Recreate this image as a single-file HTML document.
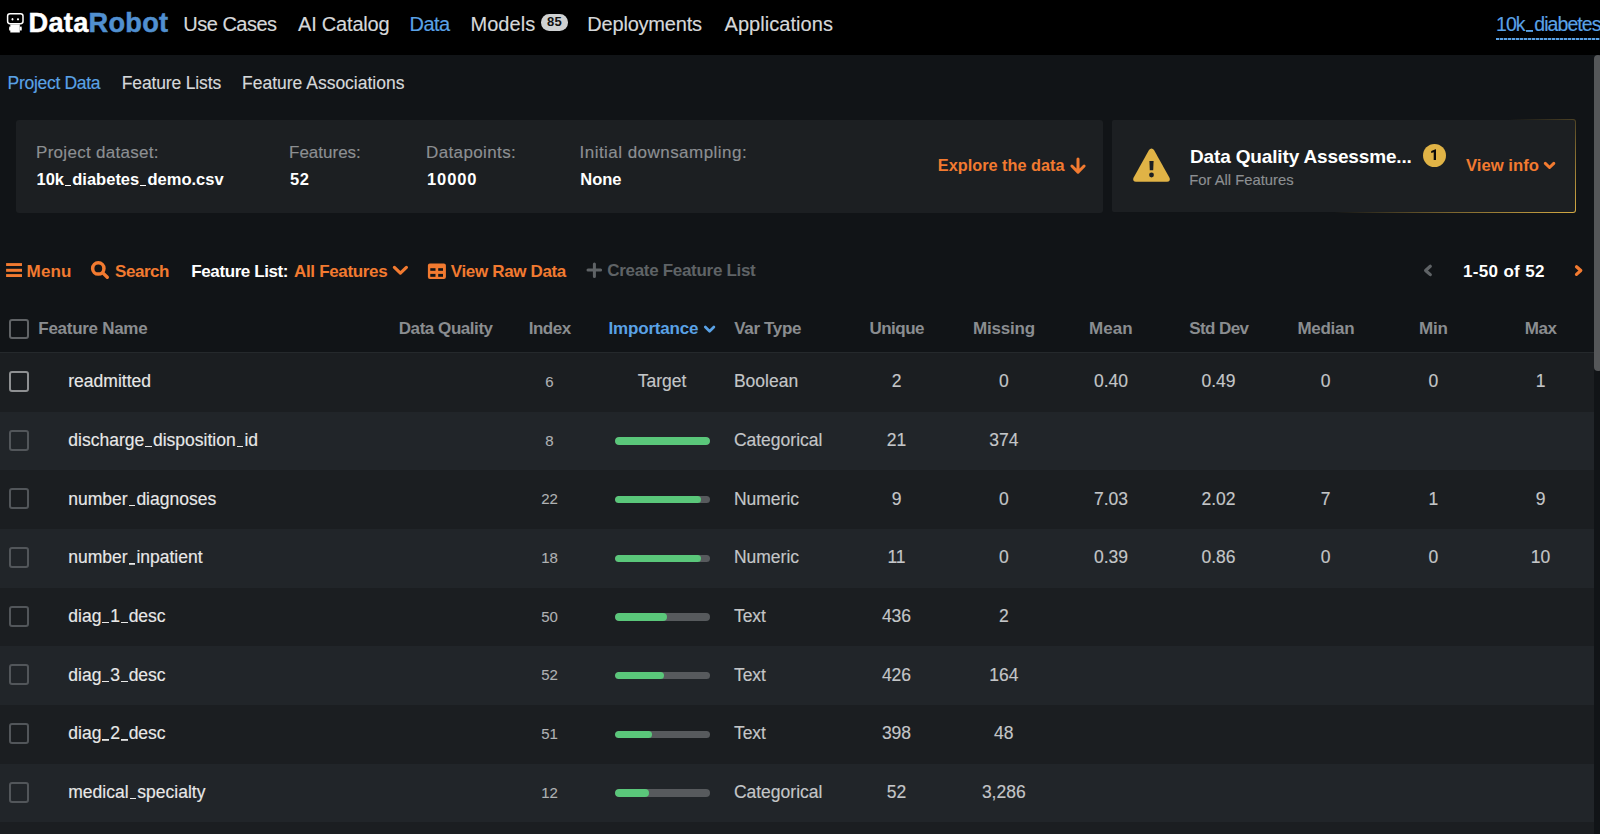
<!DOCTYPE html>
<html><head><meta charset="utf-8"><style>
html,body{margin:0;padding:0;}
body{width:1600px;height:834px;overflow:hidden;position:relative;background:#111417;font-family:"Liberation Sans", sans-serif;}
.t{position:absolute;white-space:nowrap;-webkit-text-stroke:0.15px currentColor;}
.r{position:absolute;}
.u{display:inline-block;width:0.5em;height:0.09em;vertical-align:baseline;position:relative;top:0.08em;background:linear-gradient(currentColor,currentColor) center/78% 100% no-repeat;}
</style></head><body>
<div class="r" style="left:0px;top:0px;width:1600px;height:55px;background:#000;"></div>
<svg class="r" style="left:3px;top:10px" width="25" height="25" viewBox="3 10 25 25">
<rect x="7.6" y="13.7" width="15.4" height="10" rx="2.4" fill="none" stroke="#fff" stroke-width="1.5"/>
<ellipse cx="12.5" cy="19.3" rx="0.9" ry="1.3" fill="#fff"/><circle cx="18" cy="19.3" r="1.1" fill="#fff"/>
<path d="M10.3 24.4 H19.8 V32.5 H10.3 Z" fill="#fff"/>
<path d="M9.4 26.6 Q10.4 26 11 27 V30.6 H9.2 Q8.9 28 9.4 26.6 Z M21.5 26.6 Q20.5 26 19.8 27 V30.6 H21.7 Q22 28 21.5 26.6 Z" fill="#fff"/>
</svg>
<div class="t" style="left:28.60px;top:6.48px;font-size:27.2px;line-height:33px;color:#fff;font-weight:700;-webkit-text-stroke:0;letter-spacing:0.25px;-webkit-text-stroke:0.5px currentColor;"><span style="color:#fff">Data</span><span style="color:#5190d0">Robot</span></div>
<div class="t" style="left:183.30px;top:11.87px;font-size:20px;line-height:24px;color:#d6d8da;letter-spacing:-0.5px;">Use Cases</div>
<div class="t" style="left:298.00px;top:11.87px;font-size:20px;line-height:24px;color:#d6d8da;letter-spacing:-0.2px;">AI Catalog</div>
<div class="t" style="left:409.50px;top:11.87px;font-size:20px;line-height:24px;color:#5aa2e6;letter-spacing:-0.5px;">Data</div>
<div class="t" style="left:470.40px;top:11.87px;font-size:20px;line-height:24px;color:#d6d8da;letter-spacing:0.1px;">Models</div>
<div class="r" style="left:541.2px;top:14.3px;width:26.4px;height:16.4px;border-radius:8.2px;background:#cfd1d2;"></div>
<div class="t" style="left:541.60px;width:26px;text-align:center;top:14.40px;font-size:13px;line-height:16px;color:#111;font-weight:700;-webkit-text-stroke:0;letter-spacing:0.3px;">85</div>
<div class="t" style="left:587.30px;top:11.87px;font-size:20px;line-height:24px;color:#d6d8da;letter-spacing:-0.2px;">Deployments</div>
<div class="t" style="left:724.50px;top:11.87px;font-size:20px;line-height:24px;color:#d6d8da;letter-spacing:0.05px;">Applications</div>
<div class="t" style="left:1496.00px;top:12.54px;font-size:19.5px;line-height:23px;color:#5aa2e6;letter-spacing:-0.95px;">10k<span class="u"></span>diabetes<span class="u"></span>demo.csv</div>
<div class="r" style="left:1495.5px;top:38px;width:104.5px;height:2px;background:repeating-linear-gradient(90deg,#5aa2e6 0 3px,rgba(90,162,230,0.35) 3px 4px);"></div>
<div class="r" style="left:0px;top:55px;width:1600px;height:779px;background:#111417;"></div>
<div class="t" style="left:7.60px;top:72.64px;font-size:17.5px;line-height:21px;color:#5aa2e6;letter-spacing:-0.3px;">Project Data</div>
<div class="t" style="left:121.80px;top:72.64px;font-size:17.5px;line-height:21px;color:#d6d8da;letter-spacing:-0.15px;">Feature Lists</div>
<div class="t" style="left:242.00px;top:72.64px;font-size:17.5px;line-height:21px;color:#d6d8da;">Feature Associations</div>
<div class="r" style="left:16px;top:120px;width:1087px;height:92.5px;background:#1c1f22;border-radius:3px;"></div>
<div class="t" style="left:36.00px;top:142.61px;font-size:17px;line-height:20px;color:#8c8f92;letter-spacing:0.29px;">Project dataset:</div>
<div class="t" style="left:36.50px;top:168.98px;font-size:16.5px;line-height:20px;color:#fff;font-weight:700;-webkit-text-stroke:0;">10k<span class="u"></span>diabetes<span class="u"></span>demo.csv</div>
<div class="t" style="left:289.00px;top:142.61px;font-size:17px;line-height:20px;color:#8c8f92;">Features:</div>
<div class="t" style="left:290.00px;top:168.98px;font-size:16.5px;line-height:20px;color:#fff;font-weight:700;-webkit-text-stroke:0;letter-spacing:0.5px;">52</div>
<div class="t" style="left:426.00px;top:142.61px;font-size:17px;line-height:20px;color:#8c8f92;letter-spacing:0.38px;">Datapoints:</div>
<div class="t" style="left:427.00px;top:168.98px;font-size:16.5px;line-height:20px;color:#fff;font-weight:700;-webkit-text-stroke:0;letter-spacing:0.9px;">10000</div>
<div class="t" style="left:579.60px;top:142.61px;font-size:17px;line-height:20px;color:#8c8f92;letter-spacing:0.46px;">Initial downsampling:</div>
<div class="t" style="left:580.30px;top:168.98px;font-size:16.5px;line-height:20px;color:#fff;font-weight:700;-webkit-text-stroke:0;">None</div>
<div class="t" style="left:937.80px;top:155.15px;font-size:16.3px;line-height:20px;color:#f27a30;font-weight:700;-webkit-text-stroke:0;">Explore the data</div>
<svg class="r" style="left:1069px;top:157px" width="18" height="18" viewBox="0 0 18 18">
<path d="M9 2.0 V15.2 M2.9 9.0 L9 15.2 L15.1 9.0" fill="none" stroke="#f27a30" stroke-width="3" stroke-linecap="round" stroke-linejoin="round"/></svg>
<div class="r" style="left:1111.2px;top:118.6px;width:465px;height:94.8px;border-radius:3px;border:1px solid transparent;box-sizing:border-box;background:linear-gradient(#1c1f22,#1c1f22) padding-box, linear-gradient(152deg, rgba(224,179,70,0) 62%, rgba(224,179,70,0.5) 80%, rgba(224,179,70,0.95) 100%) border-box;"></div>
<svg class="r" style="left:1131px;top:146.3px" width="41" height="38" viewBox="0 0 41 38">
<path d="M20.5 2.5 Q22 2.5 23 4 L38.6 32 Q39.6 35.6 36 35.8 L5 35.8 Q1.4 35.6 2.4 32 L18 4 Q19 2.5 20.5 2.5 Z" fill="#e0b346"/>
<path d="M18.4 14.9 H22.6 L22.2 24.3 H18.8 Z" fill="#1c1f22"/>
<circle cx="20.5" cy="29.0" r="2.4" fill="#1c1f22"/></svg>
<div class="t" style="left:1190.00px;top:144.72px;font-size:19px;line-height:23px;color:#fff;font-weight:700;-webkit-text-stroke:0;letter-spacing:-0.15px;">Data Quality Assessme...</div>
<div class="t" style="left:1189.20px;top:170.77px;font-size:14.8px;line-height:18px;color:#8c8f92;">For All Features</div>
<div class="r" style="left:1423.1px;top:143.9px;width:23px;height:23px;border-radius:50%;background:#e0b346;"></div>
<svg class="r" style="left:1420px;top:141px" width="30" height="30" viewBox="0 0 30 30"><path d="M16 8.3 V18.9 H13.7 V11.3 L11.2 12.1 V10.1 L15.6 8.3 Z" fill="#0a0a0a"/></svg>
<div class="t" style="left:1466.00px;top:155.81px;font-size:16.7px;line-height:20px;color:#f27a30;font-weight:700;-webkit-text-stroke:0;">View info</div>
<svg class="r" style="left:1542px;top:159px" width="15" height="13" viewBox="0 0 15 13">
<path d="M3.3 4.4 L7.55 8.5 L11.8 4.4" fill="none" stroke="#f27a30" stroke-width="3" stroke-linecap="round" stroke-linejoin="round"/></svg>
<svg class="r" style="left:5px;top:262px" width="19" height="17" viewBox="0 0 19 17">
<rect x="1.1" y="1.1" width="15.9" height="2.9" fill="#f27a30"/><rect x="1.1" y="6.8" width="15.9" height="3" fill="#f27a30"/><rect x="1.1" y="12.1" width="15.9" height="2.9" fill="#f27a30"/></svg>
<div class="t" style="left:26.60px;top:261.61px;font-size:17px;line-height:20px;color:#f27a30;font-weight:700;-webkit-text-stroke:0;letter-spacing:0.15px;">Menu</div>
<svg class="r" style="left:89px;top:259px" width="22" height="22" viewBox="0 0 22 22">
<circle cx="9.3" cy="9.4" r="5.65" fill="none" stroke="#f27a30" stroke-width="3.5"/>
<path d="M13.8 13.9 L18.3 18.3" stroke="#f27a30" stroke-width="3.4" stroke-linecap="round"/></svg>
<div class="t" style="left:115.00px;top:261.61px;font-size:17px;line-height:20px;color:#f27a30;font-weight:700;-webkit-text-stroke:0;letter-spacing:-0.45px;">Search</div>
<div class="t" style="left:191.30px;top:261.51px;font-size:17px;line-height:20px;color:#fff;font-weight:700;-webkit-text-stroke:0;letter-spacing:-0.4px;">Feature List:</div>
<div class="t" style="left:294.00px;top:261.51px;font-size:17px;line-height:20px;color:#f27a30;font-weight:700;-webkit-text-stroke:0;letter-spacing:-0.33px;">All Features</div>
<svg class="r" style="left:391px;top:263px" width="19" height="14" viewBox="0 0 19 14">
<path d="M3.4 4.4 L9.4 10.1 L15.4 4.4" fill="none" stroke="#f27a30" stroke-width="3.2" stroke-linecap="round" stroke-linejoin="round"/></svg>
<svg class="r" style="left:427px;top:263px" width="20" height="17" viewBox="0 0 20 17">
<rect x="0.9" y="0.5" width="18" height="15.6" rx="2" fill="#f27a30"/>
<rect x="3.3" y="5.2" width="5.2" height="2.6" fill="#111417"/><rect x="11.2" y="5.2" width="4.8" height="2.6" fill="#111417"/>
<rect x="3.3" y="10.9" width="5.2" height="2.9" fill="#111417"/><rect x="11.2" y="10.9" width="4.8" height="2.9" fill="#111417"/></svg>
<div class="t" style="left:450.80px;top:261.61px;font-size:17px;line-height:20px;color:#f27a30;font-weight:700;-webkit-text-stroke:0;letter-spacing:-0.35px;">View Raw Data</div>
<svg class="r" style="left:585px;top:261px" width="19" height="19" viewBox="0 0 19 19">
<path d="M9.4 2.9 V15.5 M3 9.1 H15.6" stroke="#5f6366" stroke-width="3" stroke-linecap="round"/></svg>
<div class="t" style="left:607.20px;top:261.01px;font-size:17px;line-height:20px;color:#5f6366;font-weight:700;-webkit-text-stroke:0;letter-spacing:-0.3px;">Create Feature List</div>
<svg class="r" style="left:1422px;top:263px" width="12" height="15" viewBox="0 0 12 15">
<path d="M8.3 3.3 L3.6 7.45 L8.3 11.6" fill="none" stroke="#5f6366" stroke-width="3.2" stroke-linecap="round" stroke-linejoin="round"/></svg>
<div class="t" style="left:1463.00px;top:261.61px;font-size:17px;line-height:20px;color:#fff;font-weight:700;-webkit-text-stroke:0;letter-spacing:0.33px;">1-50 of 52</div>
<svg class="r" style="left:1572px;top:263px" width="12" height="15" viewBox="0 0 12 15">
<path d="M4.5 3.7 L8.8 7.55 L4.5 11.4" fill="none" stroke="#f27a30" stroke-width="3.2" stroke-linecap="round" stroke-linejoin="round"/></svg>
<div class="r" style="left:0px;top:352px;width:1594px;height:1px;background:#25292c;"></div>
<div class="r" style="left:8.9px;top:318.8px;width:19.7px;height:19.8px;border:2px solid #606366;border-radius:3px;box-sizing:border-box;"></div>
<div class="t" style="left:38.30px;top:318.81px;font-size:17px;line-height:20px;color:#8a8d90;font-weight:700;-webkit-text-stroke:0;letter-spacing:-0.28px;">Feature Name</div>
<div class="t" style="left:398.80px;top:318.81px;font-size:17px;line-height:20px;color:#8a8d90;font-weight:700;-webkit-text-stroke:0;letter-spacing:-0.45px;">Data Quality</div>
<div class="t" style="left:499.70px;width:100px;text-align:center;top:318.81px;font-size:17px;line-height:20px;color:#8a8d90;font-weight:700;-webkit-text-stroke:0;letter-spacing:-0.5px;">Index</div>
<div class="t" style="left:608.60px;top:318.81px;font-size:17px;line-height:20px;color:#5aa2e6;font-weight:700;-webkit-text-stroke:0;letter-spacing:-0.2px;">Importance</div>
<svg class="r" style="left:703px;top:322px" width="14" height="13" viewBox="0 0 14 13">
<path d="M2.3 5 L6.6 9.2 L10.9 5" fill="none" stroke="#5aa2e6" stroke-width="2.7" stroke-linecap="round" stroke-linejoin="round"/></svg>
<div class="t" style="left:734.30px;top:318.81px;font-size:17px;line-height:20px;color:#8a8d90;font-weight:700;-webkit-text-stroke:0;letter-spacing:-0.36px;">Var Type</div>
<div class="t" style="left:843.75px;width:106px;text-align:center;top:318.81px;font-size:17px;line-height:20px;color:#8a8d90;font-weight:700;-webkit-text-stroke:0;letter-spacing:-0.5px;">Unique</div>
<div class="t" style="left:950.90px;width:106px;text-align:center;top:318.81px;font-size:17px;line-height:20px;color:#8a8d90;font-weight:700;-webkit-text-stroke:0;letter-spacing:-0.2px;">Missing</div>
<div class="t" style="left:1057.95px;width:106px;text-align:center;top:318.81px;font-size:17px;line-height:20px;color:#8a8d90;font-weight:700;-webkit-text-stroke:0;letter-spacing:0.1px;">Mean</div>
<div class="t" style="left:1165.80px;width:106px;text-align:center;top:318.81px;font-size:17px;line-height:20px;color:#8a8d90;font-weight:700;-webkit-text-stroke:0;letter-spacing:-0.6px;">Std Dev</div>
<div class="t" style="left:1272.85px;width:106px;text-align:center;top:318.81px;font-size:17px;line-height:20px;color:#8a8d90;font-weight:700;-webkit-text-stroke:0;letter-spacing:-0.3px;">Median</div>
<div class="t" style="left:1380.40px;width:106px;text-align:center;top:318.81px;font-size:17px;line-height:20px;color:#8a8d90;font-weight:700;-webkit-text-stroke:0;letter-spacing:-0.2px;">Min</div>
<div class="t" style="left:1487.70px;width:106px;text-align:center;top:318.81px;font-size:17px;line-height:20px;color:#8a8d90;font-weight:700;-webkit-text-stroke:0;letter-spacing:-0.4px;">Max</div>
<div class="r" style="left:0px;top:353.00px;width:1594px;height:58.68px;background:#1b1e21;"></div>
<div class="r" style="left:0px;top:411.67px;width:1594px;height:58.68px;background:#212529;"></div>
<div class="r" style="left:0px;top:470.34px;width:1594px;height:58.68px;background:#1b1e21;"></div>
<div class="r" style="left:0px;top:529.01px;width:1594px;height:58.68px;background:#212529;"></div>
<div class="r" style="left:0px;top:587.68px;width:1594px;height:58.68px;background:#1b1e21;"></div>
<div class="r" style="left:0px;top:646.35px;width:1594px;height:58.68px;background:#212529;"></div>
<div class="r" style="left:0px;top:705.02px;width:1594px;height:58.68px;background:#1b1e21;"></div>
<div class="r" style="left:0px;top:763.69px;width:1594px;height:58.68px;background:#212529;"></div>
<div class="r" style="left:0px;top:822.36px;width:1594px;height:58.68px;background:#1b1e21;"></div>
<div class="r" style="left:8.9px;top:371.03px;width:19.7px;height:20.9px;border:2px solid #8e9092;border-radius:3px;box-sizing:border-box;"></div>
<div class="t" style="left:68.30px;top:371.37px;font-size:17.5px;line-height:21px;color:#e8e8e8;">readmitted</div>
<div class="t" style="left:519.50px;width:60px;text-align:center;top:372.94px;font-size:15px;line-height:18px;color:#b0b2b4;-webkit-text-stroke:0.1px currentColor;">6</div>
<div class="t" style="left:612.00px;width:100px;text-align:center;top:371.37px;font-size:17.5px;line-height:21px;color:#c4c6c8;">Target</div>
<div class="t" style="left:733.90px;top:371.37px;font-size:17.5px;line-height:21px;color:#c4c6c8;">Boolean</div>
<div class="t" style="left:843.50px;width:106px;text-align:center;top:371.37px;font-size:17.5px;line-height:21px;color:#c4c6c8;">2</div>
<div class="t" style="left:950.80px;width:106px;text-align:center;top:371.37px;font-size:17.5px;line-height:21px;color:#c4c6c8;">0</div>
<div class="t" style="left:1058.00px;width:106px;text-align:center;top:371.37px;font-size:17.5px;line-height:21px;color:#c4c6c8;">0.40</div>
<div class="t" style="left:1165.50px;width:106px;text-align:center;top:371.37px;font-size:17.5px;line-height:21px;color:#c4c6c8;">0.49</div>
<div class="t" style="left:1272.70px;width:106px;text-align:center;top:371.37px;font-size:17.5px;line-height:21px;color:#c4c6c8;">0</div>
<div class="t" style="left:1380.30px;width:106px;text-align:center;top:371.37px;font-size:17.5px;line-height:21px;color:#c4c6c8;">0</div>
<div class="t" style="left:1487.50px;width:106px;text-align:center;top:371.37px;font-size:17.5px;line-height:21px;color:#c4c6c8;">1</div>
<div class="r" style="left:8.9px;top:429.70px;width:19.7px;height:20.9px;border:2px solid #52565a;border-radius:3px;box-sizing:border-box;"></div>
<div class="t" style="left:68.30px;top:430.04px;font-size:17.5px;line-height:21px;color:#e8e8e8;">discharge<span class="u"></span>disposition<span class="u"></span>id</div>
<div class="t" style="left:519.50px;width:60px;text-align:center;top:431.61px;font-size:15px;line-height:18px;color:#b0b2b4;-webkit-text-stroke:0.1px currentColor;">8</div>
<div class="r" style="left:615px;top:437.25px;width:94.5px;height:7.5px;border-radius:4px;background:#575a5d;overflow:hidden;"><div style="width:94.50px;height:7.5px;border-radius:4px;background:#5ac77a;"></div></div>
<div class="t" style="left:733.90px;top:430.04px;font-size:17.5px;line-height:21px;color:#c4c6c8;">Categorical</div>
<div class="t" style="left:843.50px;width:106px;text-align:center;top:430.04px;font-size:17.5px;line-height:21px;color:#c4c6c8;">21</div>
<div class="t" style="left:950.80px;width:106px;text-align:center;top:430.04px;font-size:17.5px;line-height:21px;color:#c4c6c8;">374</div>
<div class="r" style="left:8.9px;top:488.38px;width:19.7px;height:20.9px;border:2px solid #52565a;border-radius:3px;box-sizing:border-box;"></div>
<div class="t" style="left:68.30px;top:488.71px;font-size:17.5px;line-height:21px;color:#e8e8e8;">number<span class="u"></span>diagnoses</div>
<div class="t" style="left:519.50px;width:60px;text-align:center;top:490.28px;font-size:15px;line-height:18px;color:#b0b2b4;-webkit-text-stroke:0.1px currentColor;">22</div>
<div class="r" style="left:615px;top:495.93px;width:94.5px;height:7.5px;border-radius:4px;background:#575a5d;overflow:hidden;"><div style="width:86.37px;height:7.5px;border-radius:4px;background:#5ac77a;"></div></div>
<div class="t" style="left:733.90px;top:488.71px;font-size:17.5px;line-height:21px;color:#c4c6c8;">Numeric</div>
<div class="t" style="left:843.50px;width:106px;text-align:center;top:488.71px;font-size:17.5px;line-height:21px;color:#c4c6c8;">9</div>
<div class="t" style="left:950.80px;width:106px;text-align:center;top:488.71px;font-size:17.5px;line-height:21px;color:#c4c6c8;">0</div>
<div class="t" style="left:1058.00px;width:106px;text-align:center;top:488.71px;font-size:17.5px;line-height:21px;color:#c4c6c8;">7.03</div>
<div class="t" style="left:1165.50px;width:106px;text-align:center;top:488.71px;font-size:17.5px;line-height:21px;color:#c4c6c8;">2.02</div>
<div class="t" style="left:1272.70px;width:106px;text-align:center;top:488.71px;font-size:17.5px;line-height:21px;color:#c4c6c8;">7</div>
<div class="t" style="left:1380.30px;width:106px;text-align:center;top:488.71px;font-size:17.5px;line-height:21px;color:#c4c6c8;">1</div>
<div class="t" style="left:1487.50px;width:106px;text-align:center;top:488.71px;font-size:17.5px;line-height:21px;color:#c4c6c8;">9</div>
<div class="r" style="left:8.9px;top:547.05px;width:19.7px;height:20.9px;border:2px solid #52565a;border-radius:3px;box-sizing:border-box;"></div>
<div class="t" style="left:68.30px;top:547.38px;font-size:17.5px;line-height:21px;color:#e8e8e8;">number<span class="u"></span>inpatient</div>
<div class="t" style="left:519.50px;width:60px;text-align:center;top:548.95px;font-size:15px;line-height:18px;color:#b0b2b4;-webkit-text-stroke:0.1px currentColor;">18</div>
<div class="r" style="left:615px;top:554.60px;width:94.5px;height:7.5px;border-radius:4px;background:#575a5d;overflow:hidden;"><div style="width:86.18px;height:7.5px;border-radius:4px;background:#5ac77a;"></div></div>
<div class="t" style="left:733.90px;top:547.38px;font-size:17.5px;line-height:21px;color:#c4c6c8;">Numeric</div>
<div class="t" style="left:843.50px;width:106px;text-align:center;top:547.38px;font-size:17.5px;line-height:21px;color:#c4c6c8;">11</div>
<div class="t" style="left:950.80px;width:106px;text-align:center;top:547.38px;font-size:17.5px;line-height:21px;color:#c4c6c8;">0</div>
<div class="t" style="left:1058.00px;width:106px;text-align:center;top:547.38px;font-size:17.5px;line-height:21px;color:#c4c6c8;">0.39</div>
<div class="t" style="left:1165.50px;width:106px;text-align:center;top:547.38px;font-size:17.5px;line-height:21px;color:#c4c6c8;">0.86</div>
<div class="t" style="left:1272.70px;width:106px;text-align:center;top:547.38px;font-size:17.5px;line-height:21px;color:#c4c6c8;">0</div>
<div class="t" style="left:1380.30px;width:106px;text-align:center;top:547.38px;font-size:17.5px;line-height:21px;color:#c4c6c8;">0</div>
<div class="t" style="left:1487.50px;width:106px;text-align:center;top:547.38px;font-size:17.5px;line-height:21px;color:#c4c6c8;">10</div>
<div class="r" style="left:8.9px;top:605.72px;width:19.7px;height:20.9px;border:2px solid #52565a;border-radius:3px;box-sizing:border-box;"></div>
<div class="t" style="left:68.30px;top:606.05px;font-size:17.5px;line-height:21px;color:#e8e8e8;">diag<span class="u"></span>1<span class="u"></span>desc</div>
<div class="t" style="left:519.50px;width:60px;text-align:center;top:607.62px;font-size:15px;line-height:18px;color:#b0b2b4;-webkit-text-stroke:0.1px currentColor;">50</div>
<div class="r" style="left:615px;top:613.27px;width:94.5px;height:7.5px;border-radius:4px;background:#575a5d;overflow:hidden;"><div style="width:52.45px;height:7.5px;border-radius:4px;background:#5ac77a;"></div></div>
<div class="t" style="left:733.90px;top:606.05px;font-size:17.5px;line-height:21px;color:#c4c6c8;">Text</div>
<div class="t" style="left:843.50px;width:106px;text-align:center;top:606.05px;font-size:17.5px;line-height:21px;color:#c4c6c8;">436</div>
<div class="t" style="left:950.80px;width:106px;text-align:center;top:606.05px;font-size:17.5px;line-height:21px;color:#c4c6c8;">2</div>
<div class="r" style="left:8.9px;top:664.39px;width:19.7px;height:20.9px;border:2px solid #52565a;border-radius:3px;box-sizing:border-box;"></div>
<div class="t" style="left:68.30px;top:664.72px;font-size:17.5px;line-height:21px;color:#e8e8e8;">diag<span class="u"></span>3<span class="u"></span>desc</div>
<div class="t" style="left:519.50px;width:60px;text-align:center;top:666.29px;font-size:15px;line-height:18px;color:#b0b2b4;-webkit-text-stroke:0.1px currentColor;">52</div>
<div class="r" style="left:615px;top:671.94px;width:94.5px;height:7.5px;border-radius:4px;background:#575a5d;overflow:hidden;"><div style="width:49.14px;height:7.5px;border-radius:4px;background:#5ac77a;"></div></div>
<div class="t" style="left:733.90px;top:664.72px;font-size:17.5px;line-height:21px;color:#c4c6c8;">Text</div>
<div class="t" style="left:843.50px;width:106px;text-align:center;top:664.72px;font-size:17.5px;line-height:21px;color:#c4c6c8;">426</div>
<div class="t" style="left:950.80px;width:106px;text-align:center;top:664.72px;font-size:17.5px;line-height:21px;color:#c4c6c8;">164</div>
<div class="r" style="left:8.9px;top:723.06px;width:19.7px;height:20.9px;border:2px solid #52565a;border-radius:3px;box-sizing:border-box;"></div>
<div class="t" style="left:68.30px;top:723.39px;font-size:17.5px;line-height:21px;color:#e8e8e8;">diag<span class="u"></span>2<span class="u"></span>desc</div>
<div class="t" style="left:519.50px;width:60px;text-align:center;top:724.96px;font-size:15px;line-height:18px;color:#b0b2b4;-webkit-text-stroke:0.1px currentColor;">51</div>
<div class="r" style="left:615px;top:730.61px;width:94.5px;height:7.5px;border-radius:4px;background:#575a5d;overflow:hidden;"><div style="width:36.86px;height:7.5px;border-radius:4px;background:#5ac77a;"></div></div>
<div class="t" style="left:733.90px;top:723.39px;font-size:17.5px;line-height:21px;color:#c4c6c8;">Text</div>
<div class="t" style="left:843.50px;width:106px;text-align:center;top:723.39px;font-size:17.5px;line-height:21px;color:#c4c6c8;">398</div>
<div class="t" style="left:950.80px;width:106px;text-align:center;top:723.39px;font-size:17.5px;line-height:21px;color:#c4c6c8;">48</div>
<div class="r" style="left:8.9px;top:781.73px;width:19.7px;height:20.9px;border:2px solid #52565a;border-radius:3px;box-sizing:border-box;"></div>
<div class="t" style="left:68.30px;top:782.06px;font-size:17.5px;line-height:21px;color:#e8e8e8;">medical<span class="u"></span>specialty</div>
<div class="t" style="left:519.50px;width:60px;text-align:center;top:783.63px;font-size:15px;line-height:18px;color:#b0b2b4;-webkit-text-stroke:0.1px currentColor;">12</div>
<div class="r" style="left:615px;top:789.28px;width:94.5px;height:7.5px;border-radius:4px;background:#575a5d;overflow:hidden;"><div style="width:34.02px;height:7.5px;border-radius:4px;background:#5ac77a;"></div></div>
<div class="t" style="left:733.90px;top:782.06px;font-size:17.5px;line-height:21px;color:#c4c6c8;">Categorical</div>
<div class="t" style="left:843.50px;width:106px;text-align:center;top:782.06px;font-size:17.5px;line-height:21px;color:#c4c6c8;">52</div>
<div class="t" style="left:950.80px;width:106px;text-align:center;top:782.06px;font-size:17.5px;line-height:21px;color:#c4c6c8;">3,286</div>
<div class="r" style="left:1594px;top:55.3px;width:8px;height:315.6px;background:#555759;border-radius:5px;"></div>
</body></html>
